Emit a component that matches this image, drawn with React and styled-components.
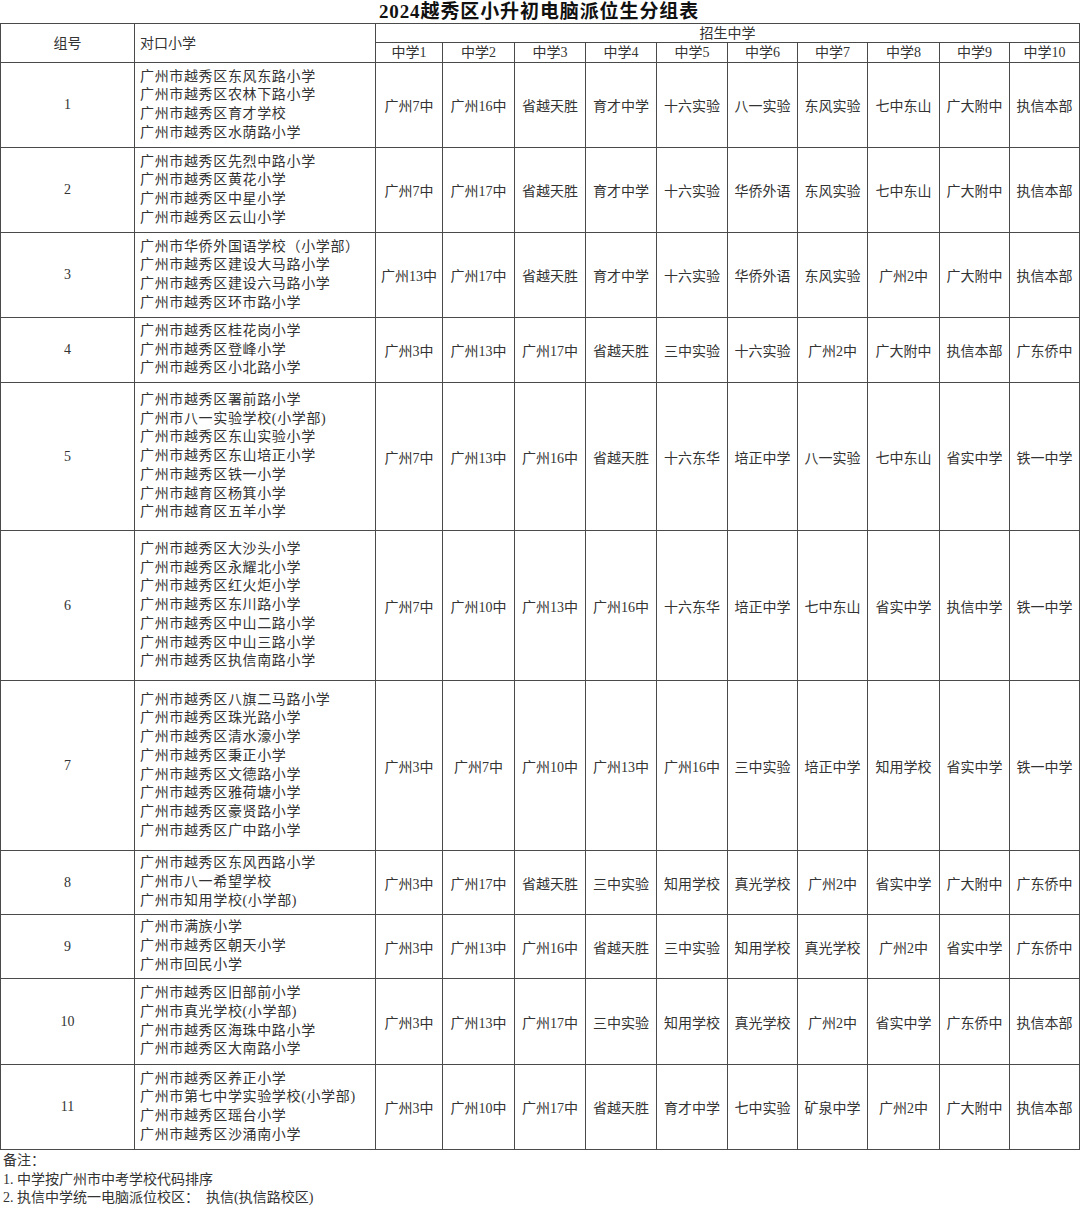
import React from "react";
import styled, {createGlobalStyle} from "styled-components";

const GlobalStyle = createGlobalStyle`
    html, body {
        margin: 0;
        padding: 0;
        background: #ffffff;
    }
    body {
        font-family: "Liberation Serif", "Noto Sans CJK SC", serif;
        color: #2b2b2b;
    }
`;

const Page = styled.div`
    width: 1080px;
    height: 1209px;
    overflow: hidden;
    background: #ffffff;
`;

const Title = styled.h1`
    margin: 0;
    height: 23px;
    line-height: 24px;
    width: 1078px;
    text-align: center;
    font-size: 19px;
    font-weight: bold;
    letter-spacing: 0.9px;
    color: #111;
`;

const Table = styled.table`
    width: 1079px;
    border-collapse: collapse;
    table-layout: fixed;
    font-size: 14px;
`;

const HeadCell = styled.th`
    border: 1px solid #4a4a4a;
    font-weight: normal;
    padding: 0 ${p => (p.left ? "5px" : "0")};
    text-align: ${p => (p.left ? "left" : "center")};
    vertical-align: middle;
    line-height: 15px;
    color: #333;
    white-space: nowrap;
`;

const Row = styled.tr`
    height: ${p => p.h}px;
`;

const Cell = styled.td`
    border: 1px solid #4a4a4a;
    padding: 0;
    text-align: center;
    vertical-align: middle;
    white-space: nowrap;
    color: #333;
`;

const SchoolCell = styled.td`
    border: 1px solid #4a4a4a;
    padding: 0 0 0 5px;
    vertical-align: middle;
    white-space: nowrap;
    color: #333;
`;

const SchoolLine = styled.div`
    line-height: 18.7px;
    letter-spacing: 0.65px;
`;

const Notes = styled.div`
    padding: 2px 0 0 3px;
    font-size: 14px;
    line-height: 18.7px;
    color: #333;
`;

const cols = [134, 241, 67, 72, 71, 71, 71, 70, 70, 72, 70, 70];

const p = "广州市越秀区";

const rows = [
    {h: 85, schools: [p + "东风东路小学", p + "农林下路小学", p + "育才学校", p + "水荫路小学"],
        mid: ["广州7中", "广州16中", "省越天胜", "育才中学", "十六实验", "八一实验", "东风实验", "七中东山", "广大附中", "执信本部"]},
    {h: 85, schools: [p + "先烈中路小学", p + "黄花小学", p + "中星小学", p + "云山小学"],
        mid: ["广州7中", "广州17中", "省越天胜", "育才中学", "十六实验", "华侨外语", "东风实验", "七中东山", "广大附中", "执信本部"]},
    {h: 85, schools: ["广州市华侨外国语学校（小学部）", p + "建设大马路小学", p + "建设六马路小学", p + "环市路小学"],
        mid: ["广州13中", "广州17中", "省越天胜", "育才中学", "十六实验", "华侨外语", "东风实验", "广州2中", "广大附中", "执信本部"]},
    {h: 65, schools: [p + "桂花岗小学", p + "登峰小学", p + "小北路小学"],
        mid: ["广州3中", "广州13中", "广州17中", "省越天胜", "三中实验", "十六实验", "广州2中", "广大附中", "执信本部", "广东侨中"]},
    {h: 148, schools: [p + "署前路小学", "广州市八一实验学校(小学部)", p + "东山实验小学", p + "东山培正小学", p + "铁一小学", "广州市越育区杨箕小学", "广州市越育区五羊小学"],
        mid: ["广州7中", "广州13中", "广州16中", "省越天胜", "十六东华", "培正中学", "八一实验", "七中东山", "省实中学", "铁一中学"]},
    {h: 150, schools: [p + "大沙头小学", p + "永耀北小学", p + "红火炬小学", p + "东川路小学", p + "中山二路小学", p + "中山三路小学", p + "执信南路小学"],
        mid: ["广州7中", "广州10中", "广州13中", "广州16中", "十六东华", "培正中学", "七中东山", "省实中学", "执信中学", "铁一中学"]},
    {h: 170, schools: [p + "八旗二马路小学", p + "珠光路小学", p + "清水濠小学", p + "秉正小学", p + "文德路小学", p + "雅荷塘小学", p + "豪贤路小学", p + "广中路小学"],
        mid: ["广州3中", "广州7中", "广州10中", "广州13中", "广州16中", "三中实验", "培正中学", "知用学校", "省实中学", "铁一中学"]},
    {h: 64, schools: [p + "东风西路小学", "广州市八一希望学校", "广州市知用学校(小学部)"],
        mid: ["广州3中", "广州17中", "省越天胜", "三中实验", "知用学校", "真光学校", "广州2中", "省实中学", "广大附中", "广东侨中"]},
    {h: 64, schools: ["广州市满族小学", p + "朝天小学", "广州市回民小学"],
        mid: ["广州3中", "广州13中", "广州16中", "省越天胜", "三中实验", "知用学校", "真光学校", "广州2中", "省实中学", "广东侨中"]},
    {h: 86, schools: [p + "旧部前小学", "广州市真光学校(小学部)", p + "海珠中路小学", p + "大南路小学"],
        mid: ["广州3中", "广州13中", "广州17中", "三中实验", "知用学校", "真光学校", "广州2中", "省实中学", "广东侨中", "执信本部"]},
    {h: 85, schools: [p + "养正小学", "广州市第七中学实验学校(小学部)", p + "瑶台小学", p + "沙涌南小学"],
        mid: ["广州3中", "广州10中", "广州17中", "省越天胜", "育才中学", "七中实验", "矿泉中学", "广州2中", "广大附中", "执信本部"]},
];

export default function App() {
    return (
        <>
            <GlobalStyle />
            <Page>
                <Title>2024越秀区小升初电脑派位生分组表</Title>
                <Table>
                    <colgroup>
                        {cols.map((w, i) => <col key={i} style={{width: w}} />)}
                    </colgroup>
                    <thead>
                        <Row h={19}>
                            <HeadCell rowSpan={2}>组号</HeadCell>
                            <HeadCell rowSpan={2} left>对口小学</HeadCell>
                            <HeadCell colSpan={10}>招生中学</HeadCell>
                        </Row>
                        <Row h={20}>
                            {Array.from({length: 10}, (_, i) => (
                                <HeadCell key={i}>中学{i + 1}</HeadCell>
                            ))}
                        </Row>
                    </thead>
                    <tbody>
                        {rows.map((r, i) => (
                            <Row key={i} h={r.h}>
                                <Cell>{i + 1}</Cell>
                                <SchoolCell>
                                    {r.schools.map(s => <SchoolLine key={s}>{s}</SchoolLine>)}
                                </SchoolCell>
                                {r.mid.map((m, j) => <Cell key={j}>{m}</Cell>)}
                            </Row>
                        ))}
                    </tbody>
                </Table>
                <Notes>
                    <div>备注：</div>
                    <div>1. 中学按广州市中考学校代码排序</div>
                    <div>2. 执信中学统一电脑派位校区：&nbsp; 执信(执信路校区)</div>
                </Notes>
            </Page>
        </>
    );
}
